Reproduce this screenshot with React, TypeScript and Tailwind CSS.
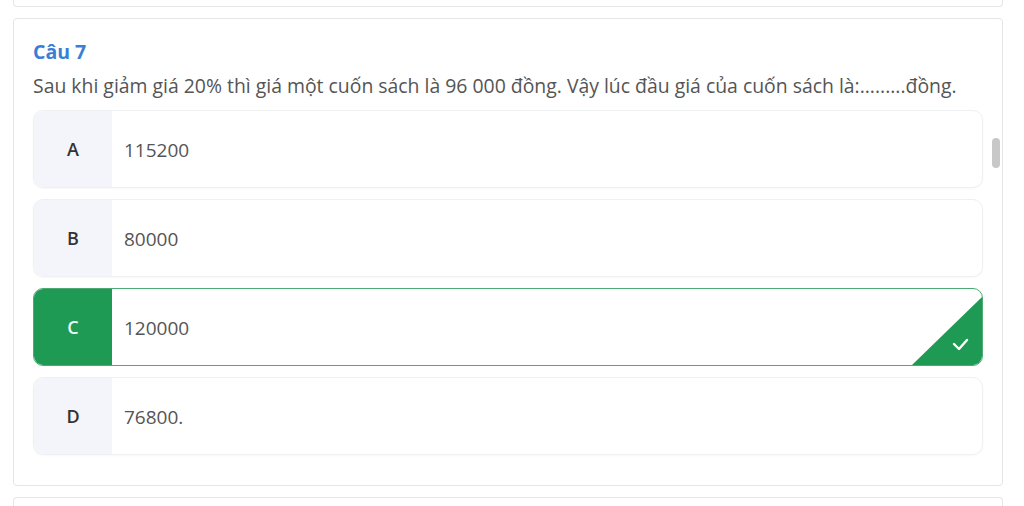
import React from "react";

const options = [
  { key: "A", text: "115200", correct: false },
  { key: "B", text: "80000", correct: false },
  { key: "C", text: "120000", correct: true },
  { key: "D", text: "76800.", correct: false },
];

export default function App() {
  return (
    <div
      className="w-[1024px] h-[506px] overflow-hidden bg-white pl-[13px] pr-[21px] flex flex-col gap-[11px]"
      style={{ fontFamily: '"Open Sans", "Noto Sans", sans-serif' }}
    >
      <div className="h-[7px] shrink-0 border-x border-b border-[#e6e6e6] rounded-b-[4px]" />
      <div className="relative shrink-0 h-[468px] border border-[#e6e6e6] rounded-[4px] pl-[19px] pr-[19px] pt-[20px]">
        <div className="text-[19.5px] leading-[26px] font-bold text-[#3a7fd6]">Câu 7</div>
        <div className="mt-[8px] text-[19.4px] leading-[26px] text-[#555] whitespace-nowrap">
          Sau khi giảm giá 20% thì giá một cuốn sách là 96 000 đồng. Vậy lúc đầu giá của cuốn sách là:.........đồng.
        </div>
        <div className="mt-[11px] flex flex-col gap-[11px]">
          {options.map((o) =>
            o.correct ? (
              <div
                key={o.key}
                className="relative h-[78px] flex rounded-[10px] border border-[#4caa72] overflow-hidden bg-white"
              >
                <div className="w-[78px] shrink-0 bg-[#1f9a54] flex items-center justify-center text-[18px] font-semibold text-[#eefbf2]">
                  {o.key}
                </div>
                <div className="flex items-center pl-[12px] pt-[3px] text-[19px] text-[#555]">{o.text}</div>
                <svg className="absolute right-0 bottom-0" width="70" height="68" viewBox="0 0 70 68">
                  <polygon points="70,0 70,68 0,68" fill="#1f9a54" />
                  <path d="M42 47 L47 52 L55 43" stroke="white" strokeWidth="2.4" fill="none" strokeLinecap="round" strokeLinejoin="round" />
                </svg>
              </div>
            ) : (
              <div
                key={o.key}
                className="h-[78px] flex rounded-[10px] border border-[#eff0f2] overflow-hidden bg-white shadow-[0_1px_2px_rgba(0,0,0,0.03)]"
              >
                <div className="w-[78px] shrink-0 bg-[#f3f5fb] flex items-center justify-center text-[18px] font-semibold text-[#333]">
                  {o.key}
                </div>
                <div className="flex items-center pl-[12px] pt-[3px] text-[19px] text-[#555]">{o.text}</div>
              </div>
            )
          )}
        </div>
        <div className="absolute left-[978px] top-[119px] w-[8px] h-[30px] rounded-full bg-[#c8c8c8]" />
      </div>
      <div className="h-[20px] shrink-0 border-x border-t border-[#e6e6e6] rounded-t-[4px]" />
    </div>
  );
}
